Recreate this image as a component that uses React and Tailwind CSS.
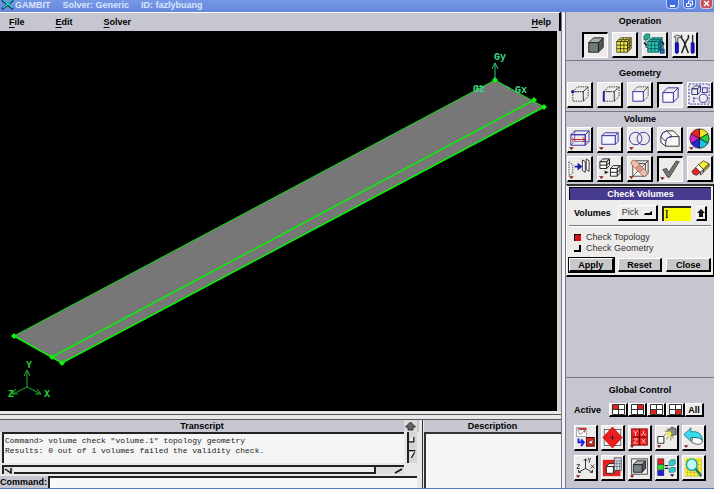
import { useState } from "react";

const raised =
  "border-t border-l border-r-2 border-b-2 border-t-white border-l-white border-r-black border-b-black";
const sunken =
  "border-t-2 border-l-2 border-r border-b border-t-black border-l-black border-r-white border-b-white";

function Cube({ x, y, w, h, d = 5, front = "none", top = "none", side = "none", stroke = "#3333a8", back = stroke, dash, backDash = dash }) {
  return (
    <g strokeWidth="1" strokeLinejoin="round">
      <path d={`M${x} ${y}l${d} ${-d}h${w}l${-d} ${d}z`} fill={top} stroke={back} strokeDasharray={backDash} />
      <path d={`M${x + w} ${y}l${d} ${-d}v${h}l${-d} ${d}z`} fill={side} stroke={back} strokeDasharray={backDash} />
      <rect x={x} y={y} width={w} height={h} fill={front} stroke={stroke} strokeDasharray={dash} />
    </g>
  );
}

function GridCube({ x, y, color, side, stroke = "#222" }) {
  return (
    <g stroke={stroke} strokeWidth="0.8">
      <path d={`M${x} ${y}l4 -4h11l-4 4z`} fill={color} />
      <path d={`M${x + 11} ${y}l4 -4v11l-4 4z`} fill={side} />
      <rect x={x} y={y} width="11" height="11" fill={color} />
      <path
        d={`M${x + 3.7} ${y}v11M${x + 7.4} ${y}v11M${x} ${y + 3.7}h11l4 -4M${x} ${y + 7.4}h11l4 -4M${x + 3.7} ${y}l4 -4M${x + 7.4} ${y}l4 -4M${x + 2} ${y - 2}h11v11`}
        fill="none"
      />
    </g>
  );
}

const menuMark = <path d="M1 20h5l-2.500 3z" fill="#8b1a1a" />;

const icons = {
  solid: <Cube x={5} y={9} w={10} h={10} d={5} front="#6f7b7b" top="#a3b0b0" side="#4e5858" stroke="#222" />,
  mesh: <GridCube x={4} y={9} color="#fbf03c" side="#d3be1c" />,
  zones: (
    <>
      <path d="M3 7v8h3M16 9h5v8" fill="none" stroke="#1d5b6a" />
      <GridCube x={5} y={9} color="#2cc4b2" side="#1a86a6" stroke="#0b4d58" />
      <path d="M1 3l2 -2h4v4l-2 2H1z" fill="#22b08c" stroke="#14604f" strokeWidth="0.8" />
      <path d="M1 10l3 3M20 10l2 2" stroke="#111" strokeWidth="1.500" />
      <rect x="18" y="17" width="4" height="4" fill="#1976b4" stroke="#123c70" />
    </>
  ),
  tools: (
    <>
      <path d="M1 4q3 -3 6 -1l1 2H5v6H3V5z" fill="#ddd" stroke="#333" strokeWidth="0.8" />
      <rect x="2.500" y="10" width="3" height="11" rx="1" fill="#1616e0" stroke="#050570" />
      <path d="M9 2q-1 3 2 6l5 13M16 2q1 3 -2 6L9 21" fill="none" stroke="#222" strokeWidth="1.500" />
      <path d="M20.500 2v8" stroke="#333" strokeWidth="1.500" />
      <rect x="19" y="10" width="3" height="11" rx="1" fill="#1616e0" stroke="#050570" />
    </>
  ),
  vertex: (
    <>
      <Cube x={5} y={9} w={11} h={10} d={5} stroke="#333" dash="1.500 1" />
      <circle cx="5" cy="9" r="1.800" fill="#1818a0" />
    </>
  ),
  edge: (
    <>
      <Cube x={6} y={9} w={11} h={10} d={5} stroke="#333" dash="1.500 1" />
      <path d="M6 8.500v11" stroke="#1d1da8" strokeWidth="2" />
    </>
  ),
  face: <Cube x={5} y={9} w={11} h={10} d={5} back="#333" backDash="1.500 1" front="#fbfbff" />,
  volume: <Cube x={4} y={9} w={11} h={10} d={5} front="#fbfbff" />,
  group: (
    <>
      <rect x="1" y="1" width="21" height="21" fill="none" stroke="#3333a8" strokeDasharray="2 1.500" />
      <Cube x={4} y={6} w={6} h={6} d={3} stroke="#333a80" />
      <rect x="15" y="5" width="5" height="5" fill="none" stroke="#3333a8" />
      <circle cx="16" cy="16" r="4.300" fill="none" stroke="#3333a8" />
      <path d="M6 15v6M6 16h4" stroke="#333a80" strokeDasharray="2 1" />
    </>
  ),
  wireVolume: (
    <>
      <Cube x={3} y={7} w={15} h={11} d={4} />
      <path d="M7 3v11h15M7 14l-4 4" fill="none" stroke="#3333a8" strokeWidth="0.700" />
      <path d="M5 12h13M15 9.500l3 2.500l-3 2.500M5 10v4" fill="none" stroke="#d01818" />
      {menuMark}
    </>
  ),
  brick: (
    <>
      <Cube x={4} y={8} w={14} h={9} d={3} front="#f4f4ff" />
      {menuMark}
    </>
  ),
  boolean: (
    <>
      <g fill="none" stroke="#3333a8">
        <circle cx="8" cy="11" r="6.500" />
        <circle cx="16" cy="11" r="6.500" />
      </g>
      {menuMark}
    </>
  ),
  blend: (
    <g fill="#f8f8f8" stroke="#333">
      <path d="M3 9q1 -5 6 -6h7l6 6v10H8l-5 -4z" />
      <path d="M8 19v-5q1 -5 7 -5h7M8 14L3 9M15 9L9 3" fill="none" />
      <path d="M3 9q1 -5 6 -6M8 14q1 -5 7 -5" fill="none" stroke="#3333a8" />
    </g>
  ),
  color: (
    <>
      <g stroke="#111" strokeWidth="0.700">
        <path d="M12 11V1A10 10 0 0 1 20.700 6z" fill="#f4e51c" />
        <path d="M12 11L20.700 6A10 10 0 0 1 20.700 16z" fill="#25cf3d" />
        <path d="M12 11L20.700 16A10 10 0 0 1 12 21z" fill="#18c6dd" />
        <path d="M12 11V21A10 10 0 0 1 3.300 16z" fill="#1d28dd" />
        <path d="M12 11L3.300 16A10 10 0 0 1 3.300 6z" fill="#d321c8" />
        <path d="M12 11L3.300 6A10 10 0 0 1 12 1z" fill="#e82020" />
      </g>
      {menuMark}
    </>
  ),
  move: (
    <>
      <path d="M1 5l4 3v9l-4 3z" fill="none" stroke="#555" strokeDasharray="1.500 1" />
      <path d="M7 9h3V6l5 4l-5 4v-3H7z" fill="#1d1da8" />
      <path d="M15 3l3 2v11l-3 -2zM19 2l3 2v11l-3 -2z" fill="#fff" stroke="#333" />
      {menuMark}
    </>
  ),
  split: (
    <>
      <Cube x={2} y={5} w={7} h={7} d={3} stroke="#222" front="#fff" />
      <path d="M2 8.500h7l3 -3" fill="none" stroke="#222" />
      <Cube x={13} y={12} w={7} h={8} d={3} stroke="#222" front="#fff" />
      <path d="M13 16h7l3 -3" fill="none" stroke="#222" />
      <path d="M7 14v4l4 -2z" fill="#222" />
      {menuMark}
    </>
  ),
  heal: (
    <>
      <Cube x={5} y={7} w={13} h={13} d={3} stroke="#444" front="#fff" />
      <path d="M5 20L18 7" stroke="#555" />
      <g transform="rotate(45 12 12)">
        <rect x="1" y="9" width="21" height="6" rx="3" fill="#eec0b2" stroke="#a3604f" strokeWidth="0.800" />
        <rect x="9" y="9" width="6" height="6" fill="#d9988a" stroke="#a3604f" strokeWidth="0.600" />
      </g>
      {menuMark}
    </>
  ),
  check: (
    <>
      <path d="M4 12l4 -1l2 4L18 3l3 1L11 20H9z" fill="#777" stroke="#444" />
      {menuMark}
    </>
  ),
  eraser: (
    <g stroke="#333" strokeWidth="0.800">
      <path d="M11 8l5 -4l6 3l-6 6z" fill="#f8f03a" />
      <path d="M16 13l6 -6v3l-6 6z" fill="#b5a818" />
      <path d="M8 11l3 -3l5 5l-3 3z" fill="#fff" />
      <path d="M13 16l3 -3v3l-3 3z" fill="#bbb" />
      <path d="M4 15l4 -4l5 5l-4 3q-4 0 -5 -4z" fill="#e8262a" />
    </g>
  ),
  fit: (
    <>
      <rect x="2" y="2" width="11" height="9" fill="#fff" stroke="#555" strokeWidth="0.500" />
      <path d="M2 2h11l-2 5l-3 -2z" fill="#e3211f" />
      <path d="M3 4h9l-6 5z" fill="#fff" stroke="#333" strokeWidth="0.500" />
      <path d="M4 13v4h5M7 14l3 3l-3 4" fill="none" stroke="#1b20e0" strokeWidth="2.200" />
      <rect x="13" y="12" width="9" height="9" fill="#e3211f" stroke="#400" />
      <path d="M15 17l6 -3l-2 5z" fill="#fff" stroke="#333" strokeWidth="0.700" />
    </>
  ),
  center: (
    <>
      <rect x="2.500" y="3.500" width="19" height="17" fill="#f8f0f0" stroke="#333" strokeWidth="0.700" />
      <path d="M12 1l11 11l-11 11l-11 -11z" fill="#ee1c1c" stroke="#9a0d0d" strokeWidth="0.700" />
      <path d="M9.500 12h5M12 9.500v5" stroke="#222" />
    </>
  ),
  axesRed: (
    <>
      <rect x="3" y="3" width="18" height="17" fill="#ea2020" stroke="#600" strokeWidth="0.800" />
      <path d="M12 3v17M3 11.500h18" stroke="#600" />
      <path d="M5 4.500l2.500 3l2.500 -3M7.500 7.500v3M16.500 5v3l-3 2M16.500 8l3 2M5.500 13.500h4l-4 4.500h4M14.500 13.500l4 4.500M18.500 13.500l-4 4.500" fill="none" stroke="#fff" strokeWidth="0.800" />
      {menuMark}
    </>
  ),
  light: (
    <>
      <path d="M2 11h7v7H2z" fill="#fff" stroke="#222" />
      <path d="M13 5l5 -4l5 2v6l-6 1z" fill="#888" stroke="#333" strokeWidth="0.800" />
      <path d="M9 10l3 -2M10 5l3 1M13 2l1 3M12 14l2 -3M17 15v-4M20 13l-2 -3" stroke="#8e8812" />
      <circle cx="15" cy="8" r="2.500" fill="#f2ee3a" />
      {menuMark}
    </>
  ),
  undo: (
    <>
      <path d="M11 12h8q4 1 3 5q-2 3 -7 2l-5 -2z" fill="#fff" stroke="#333" strokeWidth="0.800" />
      <path d="M1 9l8 -7v4h5q8 1 8 9q-3 -3 -8 -3H9v4z" fill="#35dcea" stroke="#155b68" strokeWidth="0.800" />
      {menuMark}
    </>
  ),
  axes: (
    <>
      <path d="M12 13V3M10 5l2 -2l2 2M12 13l-8 4M4 14.500v2.500h3M12 13l8 4M17 17h3v-2.500" fill="none" stroke="#222" />
      <path d="M15 2l1.500 2.500l1.500 -2.500M16.500 4.500v2.500M2 9h3.500l-3.500 4h3.500M18 9l4 4M22 9l-4 4" fill="none" stroke="#222" strokeWidth="0.900" />
      {menuMark}
    </>
  ),
  layers: (
    <>
      <rect x="1" y="4" width="20" height="17" fill="#e3211f" />
      <Cube x={5} y={11} w={8} h={7} d={3} stroke="#222" front="#fff" top="#fff" side="#ccc" />
      <rect x="14" y="2" width="8" height="13" fill="#d8dce6" stroke="#333" strokeWidth="0.800" />
      <path d="M14 5h8M14 8h8M14 11h8M17 5v10M20 5v10" stroke="#456" strokeWidth="0.600" />
    </>
  ),
  shade: (
    <>
      <rect x="3" y="3" width="18" height="16" fill="#eee" stroke="#444" />
      <Cube x={5} y={9} w={10} h={8} d={4} front="#788484" top="#a3b0b0" side="#4e5858" stroke="#222" />
      {menuMark}
    </>
  ),
  map: (
    <>
      <g stroke="#222" strokeWidth="0.600">
        <rect x="2" y="3" width="7" height="5.500" fill="#e3211f" />
        <rect x="2" y="9" width="7" height="5.500" fill="#2be035" />
        <rect x="2" y="15" width="7" height="5.500" fill="#1c1ff0" />
        <path d="M15 6l2 -2h5v4l-2 2h-5zM15 13l2 -1h5v4l-2 1h-5z" fill="#35cbd0" stroke="#155" />
      </g>
      <path d="M10 10h4M10 13h4" stroke="#111" strokeWidth="1.300" />
      <path d="M16 19h5l-2.500 3z" fill="#222" />
    </>
  ),
  magnify: (
    <>
      <rect x="2" y="2" width="19" height="19" fill="#fbf03c" />
      <path d="M5 2v19M9 2v19M13 2v19M17 2v19M21 2v19M2 5h19M2 9h19M2 13h19M2 17h19M2 21h19" stroke="#b4ab20" strokeWidth="0.600" />
      <path d="M14 13l7 8" stroke="#12747f" strokeWidth="2.500" />
      <circle cx="10" cy="9" r="6" fill="#c0f8fa" stroke="#14a2ac" strokeWidth="1.500" />
    </>
  ),
};

function ToolButton({ icon, label, pressed, narrow }) {
  return (
    <button
      type="button"
      aria-label={label}
      aria-pressed={pressed}
      className={`h-[26px] bg-[#eeebeb] ${narrow ? "w-6" : "w-[26px]"} ${pressed ? sunken : raised}`}
    >
      <svg viewBox="0 0 24 24" preserveAspectRatio="none" className="block h-full w-full">
        {icons[icon]}
      </svg>
    </button>
  );
}

function ToolRow({ items, narrow }) {
  return (
    <div className={`flex justify-center ${narrow ? "gap-[3px]" : "gap-1"}`}>
      {items.map(([icon, label, pressed]) => (
        <ToolButton key={icon} icon={icon} label={label} pressed={pressed} narrow={narrow} />
      ))}
    </div>
  );
}

function PanelTitle({ children }) {
  return <h2 className="text-center text-[9px] leading-[10px] font-bold">{children}</h2>;
}

const rule = "border-b border-b-white border-t border-t-[#777783]";

function Viewport() {
  return (
    <svg
      viewBox="0 0 557 380"
      preserveAspectRatio="none"
      className="block min-h-0 w-full flex-1 bg-black"
      role="img"
      aria-label="Volume view"
    >
      <path d="M14 305L495 49L544 76L62 332Z" fill="#777" stroke="#0be00b" strokeWidth="1" />
      <path d="M52 326L534 69" stroke="#08f008" strokeWidth="1.500" />
      <path d="M14 305L62 332L544 76" stroke="#08f008" strokeWidth="1.500" fill="none" />
      {[[14, 305], [52, 326], [62, 332], [495, 49], [534, 69], [544, 76]].map(([x, y]) => (
        <path key={x} d={`M${x - 3} ${y}l3 -3l3 3l-3 3z`} fill="#12f312" />
      ))}
      <g stroke="#30c878" fill="none">
        <path d="M495 49V32M492 38l3 -6l3 6" />
        <path d="M482 54l-6 3l3 3M505 55l5 2l-3 3" />
      </g>
      <g fill="#3bd88c" className="font-['Liberation_Mono'] text-[10px] font-bold">
        <text x="494" y="29">Gy</text>
        <text x="473" y="61">Gz</text>
        <text x="515" y="62">Gx</text>
      </g>
      <g stroke="#22b030" fill="none">
        <path d="M27 356V340M24 345l3 -6l3 6M27 356l-14 7M16 358l-4 5h6M27 356l14 7M37 358l4 5h-6" />
      </g>
      <g fill="#2bd13a" className="font-['Liberation_Mono'] text-[10px] font-bold">
        <text x="26" y="337">Y</text>
        <text x="8" y="366">Z</text>
        <text x="44" y="366">X</text>
      </g>
    </svg>
  );
}

function TitleBar() {
  return (
    <header className="flex h-3 shrink-0 items-start bg-gradient-to-b from-[#7598e6] to-[#6687dc] text-[9px] leading-[10px] font-bold text-[#dbe5ff]">
      <svg viewBox="0 0 13 10" className="h-[10px] w-[15px]">
        <path d="M1 0L12 9M12 0L1 9" stroke="#0c4650" strokeWidth="2.500" />
        <path d="M2 0L12 8M11 0L2 8" stroke="#35d5d5" strokeWidth="1.200" />
      </svg>
      <h1 className="flex gap-3">
        <span>GAMBIT</span>
        <span>Solver: Generic</span>
        <span>ID: fazlybuang</span>
      </h1>
      <div className="ml-auto flex gap-1 pr-px">
        <button type="button" aria-label="Minimize" className="flex h-[9px] w-[13px] items-end rounded-b-sm border border-t-0 border-[#b9cbf7] bg-[#3f6fdc] pb-px pl-[3px]">
          <span className="h-[2px] w-[5px] bg-white" />
        </button>
        <button type="button" aria-label="Restore" className="h-[9px] w-[13px] rounded-b-sm border border-t-0 border-[#b9cbf7] bg-[#3f6fdc]">
          <svg viewBox="0 0 11 8" className="block h-full w-full">
            <path d="M2.500 3.500h4v3h-4zM4.500 3V1h4v4H7" fill="none" stroke="#fff" />
          </svg>
        </button>
        <button type="button" aria-label="Close window" className="h-[9px] w-[13px] rounded-b-sm border border-t-0 border-[#e4c0cc] bg-[#c8505a]">
          <svg viewBox="0 0 11 8" className="block h-full w-full">
            <path d="M3 1l5 5M8 1L3 6" stroke="#fff" strokeWidth="1.500" />
          </svg>
        </button>
      </div>
    </header>
  );
}

function MenuItem({ name }) {
  return (
    <button type="button">
      <span className="underline underline-offset-2">{name[0]}</span>
      {name.slice(1)}
    </button>
  );
}

function Transcript() {
  return (
    <section className="flex min-w-0 flex-1 flex-col">
      <div className="flex h-3 items-center bg-[#c5c6d0] pr-[2px]">
        <h2 className="flex-1 text-center text-[9px] leading-3 font-bold">Transcript</h2>
        <button type="button" aria-label="Expand transcript" className="h-3 w-[13px] bg-[#dcdcdc]">
          <svg viewBox="0 0 13 12" className="block h-full w-full">
            <path d="M6.500 2l5 5H9v3H4V7H1.500z" fill="#666" stroke="#333" />
          </svg>
        </button>
      </div>
      <div className="flex h-[31px] gap-[3px] pl-[2px] pr-[2px]">
        <div className="flex-1 overflow-hidden border-t-2 border-l-2 border-[#222] bg-[#f5f5f5] pt-[2px] pl-px font-['Liberation_Mono',monospace] text-[8px] leading-[10px] whitespace-pre text-[#222]">
          <p>{'Command> volume check "volume.1" topology geometry'}</p>
          <p>Results: 0 out of 1 volumes failed the validity check.</p>
        </div>
        <svg viewBox="0 0 10 30" className="h-full w-[10px] border-l-2 border-[#222] bg-[#d5d5d5]">
          <path d="M0 8l4 -7l4 7zM0 21h8l-4 7z" fill="#eee" />
          <path d="M6 2v6H0M0 19h8M7 21l-4 7" fill="none" stroke="#111" strokeWidth="1.500" />
        </svg>
      </div>
      <div className="flex h-[11px] items-end pr-[15px] pl-[2px]">
        <div className="flex h-[9px] w-full border-t-2 border-l-2 border-[#222] bg-[#ddd]">
          <svg viewBox="0 0 10 7" className="h-[7px] w-[10px]">
            <path d="M1 2l6 4V1" fill="none" stroke="#111" strokeWidth="1.500" />
          </svg>
          <div className="mr-[18px] h-[7px] flex-1 border-b-2 border-r-2 border-[#222] bg-[#eee]" />
          <svg viewBox="0 0 10 7" className="h-[7px] w-[10px]">
            <path d="M1 6l7 -4" fill="none" stroke="#111" strokeWidth="1.500" />
          </svg>
        </div>
      </div>
      <div className="mt-[2px] flex min-h-0 flex-1 pr-[2px]">
        <label htmlFor="command" className="flex items-end bg-[#c5c6d0] pr-px text-[9px] leading-[11px] font-bold">
          Command:
        </label>
        <input id="command" className="min-w-0 flex-1 border-t-2 border-l-2 border-[#222] bg-[#f8f8f8] px-1 text-[9px] outline-none" />
      </div>
    </section>
  );
}

function CheckOption({ label, checked, onChange }) {
  return (
    <label className="flex h-[11px] items-center gap-[5px] text-[9px] leading-[11px] text-[#333]">
      <input
        type="checkbox"
        checked={checked}
        onChange={onChange}
        className={`size-[7px] appearance-none ${
          checked ? "border-t border-l border-black bg-[#d80f1c]" : "border-r-2 border-b-2 border-black bg-[#eeebeb]"
        }`}
      />
      {label}
    </label>
  );
}

function CheckVolumes() {
  const [topology, setTopology] = useState(true);
  const [geometry, setGeometry] = useState(false);
  const action = `h-[14px] flex-1 bg-[#c8c8ca] text-[9px] leading-[10px] font-bold ${raised}`;

  return (
    <form
      onSubmit={(e) => e.preventDefault()}
      className="mt-[2px] border-t-2 border-r border-b-2 border-l border-t-[#333] border-r-black border-b-black border-l-white bg-[#eeebeb] px-[2px] pt-px pb-[3px]"
    >
      <h2 className="h-[13px] border-t border-l border-black bg-[#463a8e] text-center text-[9px] leading-3 font-bold text-white">
        Check Volumes
      </h2>
      <div className="mt-[5px] flex h-4 items-center pl-[5px]">
        <label htmlFor="volumes" className="text-[9px] leading-[11px] font-bold">Volumes</label>
        <div className={`relative ml-[7px] h-4 w-10 ${raised}`}>
          <select aria-label="Pick mode" className="block h-[13px] w-full appearance-none pl-[3px] text-[9px] leading-[11px] text-[#333] outline-none">
            <option>Pick</option>
          </select>
          <span className="pointer-events-none absolute top-[5px] right-1 h-1 w-2 border-t border-r-2 border-b-2 border-l border-t-white border-r-black border-b-black border-l-white" />
        </div>
        <input id="volumes" className="ml-1 h-[15px] w-[29px] border-t-2 border-l-2 border-[#222] bg-[#fafa00] px-px font-['Liberation_Serif',serif] text-[12px] leading-3 outline-none" defaultValue="I" />
        <button type="button" aria-label="Volume list" className={`ml-[5px] h-[15px] w-[11px] ${raised}`}>
          <svg viewBox="0 0 8 12" className="block h-full w-full">
            <path d="M4 2l4 4H6v4H2V6H0z" fill="#111" />
          </svg>
        </button>
      </div>
      <div className={`mt-1 ${rule}`} />
      <div className="mt-[5px] mb-1 pl-[5px]">
        <CheckOption label="Check Topology" checked={topology} onChange={() => setTopology(!topology)} />
        <CheckOption label="Check Geometry" checked={geometry} onChange={() => setGeometry(!geometry)} />
      </div>
      <div className="flex gap-1">
        <button type="submit" className={`${action} outline outline-black`}>Apply</button>
        <button type="reset" className={action}>Reset</button>
        <button type="button" className={action}>Close</button>
      </div>
    </form>
  );
}

function QuadrantButton({ x, y, label }) {
  return (
    <button type="button" aria-label={label} className={`h-[14px] w-[19px] bg-[#eeebeb] ${raised}`}>
      <svg viewBox="0 0 16 11" className="block h-full w-full">
        <path d="M2.500 0.500h12v10h-12z" fill="#fff" />
        <rect x={x} y={y} width="6" height="5" fill="#e3211f" />
        <path d="M2.500 0.500h12v10h-12zM8.500 0.500v10M2.500 5.500h12" fill="none" stroke="#333" />
      </svg>
    </button>
  );
}

function GlobalControl() {
  return (
    <section className={`mt-auto pt-[7px] pb-[7px] ${rule} border-b-0`}>
      <PanelTitle>Global Control</PanelTitle>
      <div className="mt-2 flex items-center pr-[10px] pl-2">
        <span className="mr-auto text-[9px] leading-[11px] font-bold">Active</span>
        <div className="flex">
          <QuadrantButton x={2.5} y={0.5} label="Upper left" />
          <QuadrantButton x={8.5} y={0.5} label="Upper right" />
          <QuadrantButton x={2.5} y={5.5} label="Lower left" />
          <QuadrantButton x={8.5} y={5.5} label="Lower right" />
          <button type="button" className={`h-[14px] w-[19px] bg-[#eeebeb] text-[9px] leading-[10px] font-bold ${raised}`}>
            All
          </button>
        </div>
      </div>
      <div className="mt-2 flex flex-col gap-1">
        <ToolRow
          narrow
          items={[
            ["fit", "Fit to window"],
            ["center", "Select pivot"],
            ["axesRed", "Select preset"],
            ["light", "Modify lights"],
            ["undo", "Undo"],
          ]}
        />
        <ToolRow
          narrow
          items={[
            ["axes", "Orient model"],
            ["layers", "Display attributes"],
            ["shade", "Render model"],
            ["map", "Color mode"],
            ["magnify", "Examine mesh"],
          ]}
        />
      </div>
    </section>
  );
}

function Sidebar() {
  return (
    <aside className="flex w-[149px] shrink-0 flex-col border-l border-[#777783] bg-[#c5c6d0]">
      <section className="flex flex-col gap-[6px] pt-1 pb-[2px]">
        <PanelTitle>Operation</PanelTitle>
        <ToolRow
          items={[
            ["solid", "Geometry", true],
            ["mesh", "Mesh"],
            ["zones", "Zones"],
            ["tools", "Tools"],
          ]}
        />
      </section>
      <section className={`flex flex-col gap-1 pt-[7px] pb-[3px] ${rule} border-b-0`}>
        <PanelTitle>Geometry</PanelTitle>
        <ToolRow
          items={[
            ["vertex", "Vertex"],
            ["edge", "Edge"],
            ["face", "Face"],
            ["volume", "Volume", true],
            ["group", "Group"],
          ]}
        />
      </section>
      <section className="flex flex-col gap-[3px] border-t border-[#777783] pt-[2px]">
        <PanelTitle>Volume</PanelTitle>
        <ToolRow
          items={[
            ["wireVolume", "Form volume"],
            ["brick", "Create volume"],
            ["boolean", "Boolean operations"],
            ["blend", "Blend volumes"],
            ["color", "Modify color"],
          ]}
        />
        <ToolRow
          items={[
            ["move", "Move volumes"],
            ["split", "Split volumes"],
            ["heal", "Heal volumes"],
            ["check", "Check volumes", true],
            ["eraser", "Delete volumes"],
          ]}
        />
      </section>
      <CheckVolumes />
      <GlobalControl />
    </aside>
  );
}

export default function App() {
  return (
    <div className="h-screen bg-white pr-[6px] pb-[5px] font-['Liberation_Sans',sans-serif] text-black">
      <div className="flex h-full flex-col overflow-hidden border-b border-[#4f78bd]">
        <TitleBar />
        <div className="flex min-h-0 flex-1">
          <main className="flex min-w-0 flex-1 flex-col bg-[#e8e8ea]">
            <nav className="flex h-[19px] shrink-0 items-center border-t border-r-2 border-t-white border-r-black bg-[#c5c6d0] pr-2 pl-[9px] text-[9px] leading-[11px] font-bold">
              <div className="flex flex-1 gap-[31px]">
                <MenuItem name="File" />
                <MenuItem name="Edit" />
                <MenuItem name="Solver" />
              </div>
              <MenuItem name="Help" />
            </nav>
            <div className="flex min-h-0 flex-1 flex-col border-r-4 border-[#d3d3d8]">
              <Viewport />
            </div>
            <div className="h-[9px] shrink-0 border-b border-[#555] pt-[3px]">
              <div className="border-t border-[#555]" />
            </div>
            <div className="flex h-[68px] shrink-0">
              <Transcript />
              <section className="ml-[3px] flex w-[139px] flex-col border-l border-[#333] pl-px">
                <h2 className="h-3 bg-[#c5c6d0] text-center text-[9px] leading-3 font-bold">Description</h2>
                <div className="flex-1 border-t-2 border-l-2 border-[#333] bg-[#f5f5f5]" />
              </section>
            </div>
          </main>
          <div className="w-1 border-l border-[#777783] bg-[#f4f4f6]" />
          <Sidebar />
        </div>
      </div>
    </div>
  );
}
